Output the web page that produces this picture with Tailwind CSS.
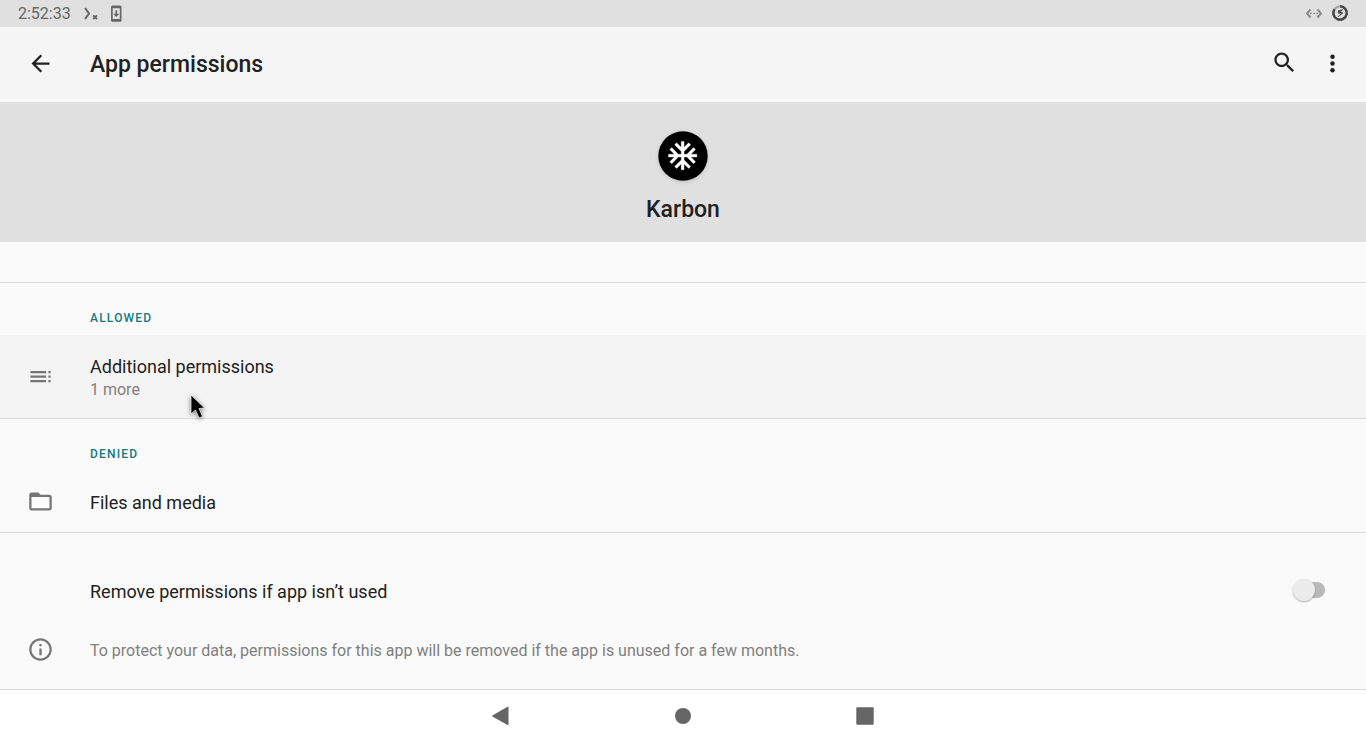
<!DOCTYPE html>
<html lang="en">
<head>
<meta charset="utf-8">
<meta name="viewport" content="width=device-width, initial-scale=1">
<title>App permissions</title>
<script src="https://cdn.jsdelivr.net/npm/@tailwindcss/browser@4"></script>
</head>
<body class="relative flex min-h-screen flex-col bg-[#fafafa] font-[Roboto,sans-serif] text-[#212121]">

<!-- Status bar -->
<div class="flex h-[27px] shrink-0 items-center bg-[#e0e0e0] pr-[17px] pl-[18px] text-[#666]">
  <time class="w-[65px] text-base leading-[27px]">2:52:33</time>
  <svg class="h-[18px] w-[18px]" viewBox="0 0 18 18" fill="none" stroke="currentColor" aria-hidden="true">
    <path d="M2 3L6 8.500L2 14" stroke-width="2.100"/>
    <path d="M10.200 10.300L14 14.200M14 10.300L10.200 14.200" stroke-width="1.900"/>
  </svg>
  <svg class="ml-[6px] h-[18px] w-[18px]" viewBox="0 0 18 18" aria-hidden="true">
    <path fill="currentColor" fill-rule="evenodd" d="M5.500 .5h7.500a1.500 1.500 0 0 1 1.500 1.500v13.200a1.500 1.500 0 0 1-1.500 1.500H5.500A1.500 1.500 0 0 1 4 15.200V2A1.500 1.500 0 0 1 5.500 .5zM5.700 3.200v10.800h7.100V3.200zM8.400 5.200h1.700v3.600h2.200L9.250 12 6.200 8.800h2.200z"/>
  </svg>
  <svg class="ml-auto h-[18px] w-[18px]" viewBox="0 0 18 18" fill="none" stroke="#8a8a8a" aria-hidden="true">
    <path d="M5.500 4.500L2 8.500L5.500 12.500M12.500 4.500L16 8.500L12.500 12.500" stroke-width="2"/>
    <path d="M5 8.500H6.700M8.200 8.500H9.800M11.300 8.500H13" stroke-width="1.700"/>
  </svg>
  <svg class="ml-[8px] h-[18px] w-[18px]" viewBox="0 0 18 18" fill="none" aria-hidden="true">
    <circle cx="9" cy="8" r="6.700" stroke="#aaa" stroke-width="2.200"/>
    <path d="M9 1.300A6.700 6.700 0 1 1 3.500 4.200" stroke="#484848" stroke-width="2.500"/>
    <path d="M12 4.500L7 5.700L7.300 8.300L10.300 8.300L7 12L12 8L9.500 6.700z" fill="#484848" stroke="#484848" stroke-width=".5"/>
  </svg>
</div>

<!-- Toolbar -->
<header class="mb-[3px] flex h-[72px] shrink-0 items-center bg-[#f5f5f5] px-[22px]">
  <button type="button" aria-label="Navigate up" class="mr-5 flex h-12 w-12 items-center justify-start pl-[5px]">
    <svg class="h-[27px] w-[27px]" viewBox="0 0 24 24" fill="currentColor"><path d="M20 11H7.830l5.590-5.590L12 4l-8 8 8 8 1.410-1.410L7.830 13H20v-2z"/></svg>
  </button>
  <h1 class="pt-1 text-[23px] leading-8 font-medium">App permissions</h1>
  <button type="button" aria-label="Search" class="ml-auto flex h-12 w-12 items-center justify-center pb-[2px]">
    <svg class="h-[27px] w-[27px]" viewBox="0 0 24 24" fill="currentColor"><path d="M15.500 14h-.79l-.28-.27C15.410 12.590 16 11.110 16 9.500 16 5.910 13.090 3 9.500 3S3 5.910 3 9.500 5.910 16 9.500 16c1.610 0 3.090-.59 4.230-1.570l.27.28v.79l5 4.990L20.490 19l-4.990-5zm-6 0C7.010 14 5 11.990 5 9.500S7.010 5 9.500 5 14 7.010 14 9.500 11.990 14 9.500 14z"/></svg>
  </button>
  <button type="button" aria-label="More options" class="-mr-3 flex h-12 w-12 items-center justify-center">
    <svg class="h-[27px] w-[27px]" viewBox="0 0 24 24" fill="currentColor"><circle cx="12" cy="6" r="2"/><circle cx="12" cy="12" r="2"/><circle cx="12" cy="18" r="2"/></svg>
  </button>
</header>

<main class="flex grow flex-col">
  <!-- App identity -->
  <div class="flex h-[140px] flex-col items-center bg-[#e0e0e0] pt-[27px]">
    <svg class="h-[54px] w-[54px] drop-shadow-sm" viewBox="0 0 54 54" aria-hidden="true">
      <circle cx="27" cy="27" r="24.700" fill="#000"/>
      <path transform="translate(9.600 9.600) scale(1.420)" fill="#fff" stroke="#fff" stroke-width=".2" d="M22 11h-4.170l3.240-3.240-1.410-1.420L15 11h-2V9l4.660-4.660-1.420-1.410L13 6.170V2h-2v4.170L7.760 2.930 6.340 4.340 11 9v2H9L4.340 6.340 2.930 7.760 6.170 11H2v2h4.170l-3.240 3.240 1.410 1.420L9 13h2v2l-4.660 4.660 1.420 1.410L11 17.830V22h2v-4.170l3.240 3.240 1.420-1.410L13 15v-2h2l4.660 4.660 1.410-1.420L17.830 13H22z"/>
    </svg>
    <h2 class="mt-[11px] text-[23px] leading-8 font-medium">Karbon</h2>
  </div>

  <section class="mt-10 border-t border-[#dadada]">
    <h3 class="h-[52px] pt-[25px] pl-[90px] text-xs leading-5 font-medium tracking-widest text-[#137a7f]">ALLOWED</h3>
    <a href="#additional" class="flex h-[83px] items-center bg-[#f4f4f4] pl-[27px]">
      <svg class="mr-9 h-[27px] w-[27px] text-[#757575]" viewBox="0 0 24 24" fill="currentColor" aria-hidden="true"><path d="M3 9h14V7H3v2zm0 4h14v-2H3v2zm0 4h14v-2H3v2zm16 0h2v-2h-2v2zm0-10v2h2V7h-2zm0 6h2v-2h-2v2z"/></svg>
      <span class="flex flex-col pt-[2px]">
        <span class="text-lg leading-6">Additional permissions</span>
        <span class="text-base leading-[22px] text-[#808080]">1 more</span>
      </span>
    </a>
  </section>

  <section class="border-y border-[#dadada]">
    <h3 class="h-[52px] pt-[25px] pl-[90px] text-xs leading-5 font-medium tracking-widest text-[#137a7f]">DENIED</h3>
    <a href="#files" class="flex h-[61px] items-center pl-[27px]">
      <svg class="mr-9 h-[27px] w-[27px] text-[#757575]" viewBox="0 0 24 24" fill="currentColor" aria-hidden="true"><path d="M20 6h-8l-2-2H4c-1.100 0-1.990.9-1.990 2L2 18c0 1.100.9 2 2 2h16c1.100 0 2-.9 2-2V8c0-1.100-.9-2-2-2zm0 12H4V8h16v10z"/></svg>
      <span class="pt-[2px] text-lg leading-6">Files and media</span>
    </a>
  </section>

  <label class="mt-[27px] flex h-[60px] items-center pr-[41px] pl-[90px]">
    <span class="pt-1 text-lg leading-6">Remove permissions if app isn’t used</span>
    <input type="checkbox" role="switch" class="relative ml-auto h-4 w-[30px] appearance-none rounded-full bg-[#b9b9b9] before:absolute before:-top-[3px] before:-left-[2px] before:h-[22px] before:w-[22px] before:rounded-full before:bg-[#ececec] before:shadow-[0_1px_2px_rgba(0,0,0,0.3)]">
  </label>
  <div class="flex h-[59px] items-center pl-[27px]">
    <svg class="mr-9 h-[27px] w-[27px] shrink-0 text-[#757575]" viewBox="0 0 24 24" fill="currentColor" aria-hidden="true"><path d="M11 7h2v2h-2zm0 4h2v6h-2zm1-9C6.480 2 2 6.480 2 12s4.480 10 10 10 10-4.480 10-10S17.520 2 12 2zm0 18c-4.410 0-8-3.590-8-8s3.590-8 8-8 8 3.590 8 8-3.590 8-8 8z"/></svg>
    <p class="pt-[2px] text-base leading-[22px] text-[#808080]">To protect your data, permissions for this app will be removed if the app is unused for a few months.</p>
  </div>
</main>

<!-- Navigation bar -->
<nav class="flex h-[54px] shrink-0 items-center justify-center gap-32 border-t border-[#dadada] bg-white text-[#666]">
  <button type="button" aria-label="Back" class="flex h-[53px] w-[54px] items-center justify-center"><svg class="h-[27px] w-[27px]" viewBox="0 0 27 27" fill="currentColor"><path d="M4.300 12.500L19.600 3.700Q20.500 3.300 20.500 4.300V21.400Q20.500 22.400 19.600 21.900L4.300 13.500Q3.700 13 4.300 12.500z"/></svg></button>
  <button type="button" aria-label="Home" class="flex h-[53px] w-[54px] items-center justify-center"><svg class="h-[27px] w-[27px]" viewBox="0 0 27 27" fill="currentColor"><circle cx="13" cy="13" r="8"/></svg></button>
  <button type="button" aria-label="Overview" class="flex h-[53px] w-[54px] items-center justify-center"><svg class="h-[27px] w-[27px]" viewBox="0 0 27 27" fill="currentColor"><rect x="4.300" y="4.300" width="17.400" height="17.400" rx="1"/></svg></button>
</nav>

<!-- Mouse pointer -->
<svg class="pointer-events-none absolute top-[391px] left-[186px] h-[32px] w-[26px] drop-shadow-[0_1px_2px_rgba(0,0,0,0.5)]" viewBox="0 0 26 32" aria-hidden="true">
  <path d="M5 4V23L9.500 19L13 27L16.500 25.500L13 17.500L18.500 17z" fill="#000" stroke="#fff" stroke-width="1" stroke-opacity=".7"/>
</svg>
</body>
</html>
